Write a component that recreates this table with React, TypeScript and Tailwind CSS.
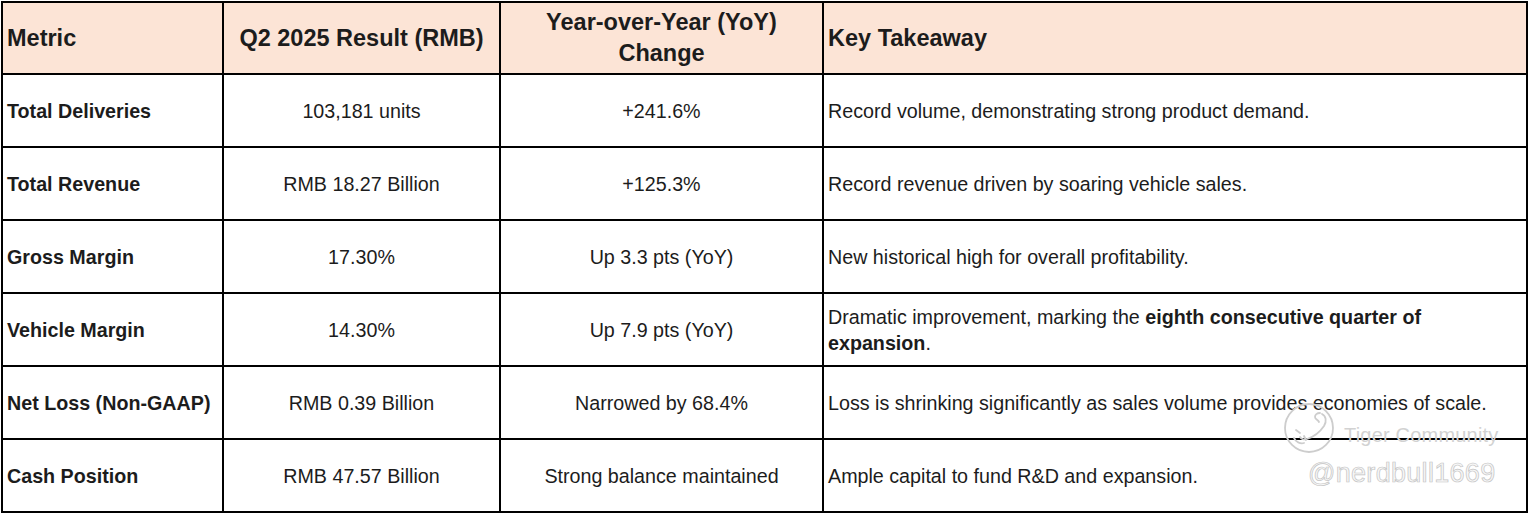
import React from "react";

const rows = [
  { metric: "Total Deliveries", result: "103,181 units", yoy: "+241.6%", take: <>Record volume, demonstrating strong product demand.</> },
  { metric: "Total Revenue", result: "RMB 18.27 Billion", yoy: "+125.3%", take: <>Record revenue driven by soaring vehicle sales.</> },
  { metric: "Gross Margin", result: "17.30%", yoy: "Up 3.3 pts (YoY)", take: <>New historical high for overall profitability.</> },
  {
    metric: "Vehicle Margin",
    result: "14.30%",
    yoy: "Up 7.9 pts (YoY)",
    take: (
      <>
        Dramatic improvement, marking the <b>eighth consecutive quarter of</b>
        <br />
        <b>expansion</b>.
      </>
    ),
  },
  { metric: "Net Loss (Non-GAAP)", result: "RMB 0.39 Billion", yoy: "Narrowed by 68.4%", take: <>Loss is shrinking significantly as sales volume provides economies of scale.</> },
  { metric: "Cash Position", result: "RMB 47.57 Billion", yoy: "Strong balance maintained", take: <>Ample capital to fund R&amp;D and expansion.</> },
];

function Watermark() {
  return (
    <div className="absolute left-[1282px] top-[400px] pointer-events-none select-none">
      <div className="flex items-center gap-[6px]">
        <svg width="56" height="56" viewBox="0 0 56 56" fill="none" stroke="#cdcdcd" strokeWidth="1.8" strokeLinecap="round">
          <circle cx="27" cy="28" r="24" />
          <path d="M40 14c4 2 5 7 2 12-4 6-11 11-17 13-3 1-6 0-7-2" />
          <path d="M38 13c-3 0-5 2-5 4s3 3 4 5" />
          <path d="M12 38c2 4 6 6 10 5M14 30l4 3M22 36l2 4" />
        </svg>
        <span className="mt-[14px] text-[20px] text-[#d2d2d2] tracking-[0.2px]">Tiger Community</span>
      </div>
      <div className="mt-[4px] ml-[26px] text-[27px] leading-none text-[#f7f7f7] [-webkit-text-stroke:0.7px_#c4c4c4] tracking-[0.3px]">
        @nerdbull1669
      </div>
    </div>
  );
}

export default function App() {
  return (
    <div className="relative w-[1528px] h-[514px] bg-white overflow-hidden font-['Liberation_Sans',Arial,sans-serif] text-[#1c1c1c] pl-[1px] pt-[1px]">
      <table className="table-fixed border-collapse w-[1525px]">
        <colgroup>
          <col className="w-[221px]" />
          <col className="w-[277px]" />
          <col className="w-[323px]" />
          <col className="w-[704px]" />
        </colgroup>
        <thead>
          <tr className="h-[72px] bg-[#fce4d6] text-[23.5px] font-bold leading-[31px]">
            <th className="border-2 border-black text-left px-[4px] align-middle">Metric</th>
            <th className="border-2 border-black text-center px-[4px] align-middle">Q2 2025 Result (RMB)</th>
            <th className="border-2 border-black text-center px-[4px] align-middle">
              Year-over-Year (YoY)
              <br />
              Change
            </th>
            <th className="border-2 border-black text-left px-[4px] align-middle">Key Takeaway</th>
          </tr>
        </thead>
        <tbody className="text-[19.7px] leading-[26px]">
          {rows.map((r) => (
            <tr key={r.metric} className="h-[73px]">
              <td className="border-2 border-black px-[4px] font-bold align-middle">{r.metric}</td>
              <td className="border-2 border-black px-[4px] text-center align-middle">{r.result}</td>
              <td className="border-2 border-black px-[4px] text-center align-middle">{r.yoy}</td>
              <td className="border-2 border-black px-[4px] align-middle">{r.take}</td>
            </tr>
          ))}
        </tbody>
      </table>
      <Watermark />
    </div>
  );
}
